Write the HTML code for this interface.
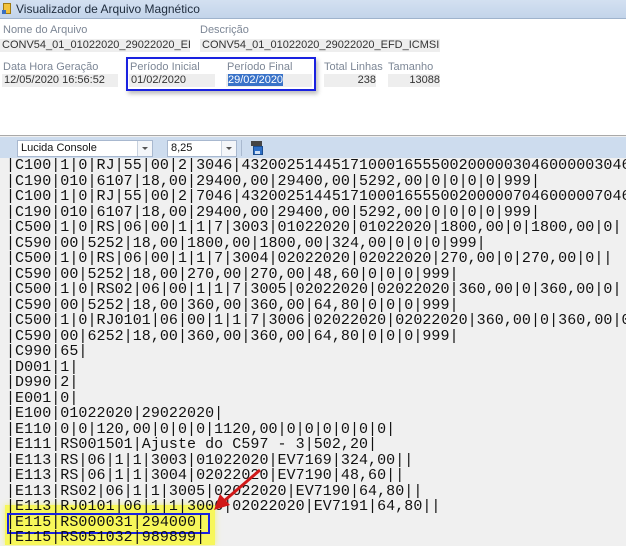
<!DOCTYPE html>
<html><head><meta charset="utf-8"><style>
*{margin:0;padding:0;box-sizing:border-box}
body{width:626px;height:543px;overflow:hidden;background:#f0f0f0;font-family:"Liberation Sans",Tahoma,sans-serif;position:relative}
.abs{position:absolute}
.title{left:0;top:0;width:626px;height:19px;background:linear-gradient(#d3e0f1,#c3d4ea);border-bottom:1px solid #9fb3cc;font-size:12px;color:#1e2b3c;line-height:18px;padding-left:16px}
.panel{left:0;top:19px;width:626px;height:117px;background:#fff;border-bottom:1px solid #a9a9a9}
.lbl{font-size:11px;color:#7d8796}
.fld{font-size:11px;color:#333;background:#eeeeee;height:13px;line-height:13px;padding-left:2px;white-space:nowrap;overflow:hidden}
.tb{left:0;top:137px;width:626px;height:21px;background:#cddcee}
.combo{background:#fff;border:1px solid #a8b8cf;height:17px;font-size:11px;line-height:15px;padding-left:3px;color:#111}
.dd{position:absolute;right:0;top:0;width:15px;height:15px;border-left:1px solid #c8d2df;background:#f4f6f9}
.dd:after{content:"";position:absolute;left:4px;top:6px;border-left:3px solid transparent;border-right:3px solid transparent;border-top:3px solid #555}
.txt{left:6px;top:158px;font-family:"Liberation Mono","Lucida Console",monospace;font-size:15px;line-height:15.5px;color:#111;white-space:pre;letter-spacing:0.05px}
</style></head><body>
<div class="abs title">Visualizador de Arquivo Magnético</div>
<div class="abs" style="left:3px;top:3px;width:8px;height:11px;background:#f2c23a;border:1px solid #a07a10"></div>
<div class="abs" style="left:2px;top:10px;width:4px;height:4px;background:#3a6fc0"></div>
<div class="abs panel"></div>
<div class="abs lbl" style="left:3px;top:24px">Nome do Arquivo</div>
<div class="abs fld" style="left:0;top:39px;width:190px">CONV54_01_01022020_29022020_EFD_IC</div>
<div class="abs lbl" style="left:200px;top:24px">Descrição</div>
<div class="abs fld" style="left:200px;top:39px;width:240px">CONV54_01_01022020_29022020_EFD_ICMSIPI.txt</div>
<div class="abs lbl" style="left:3px;top:61px">Data Hora Geração</div>
<div class="abs fld" style="left:2px;top:74px;width:116px">12/05/2020 16:56:52</div>
<div class="abs lbl" style="left:130px;top:61px">Período Inicial</div>
<div class="abs fld" style="left:129px;top:74px;width:86px">01/02/2020</div>
<div class="abs lbl" style="left:227px;top:61px">Período Final</div>
<div class="abs fld" style="left:226px;top:74px;width:86px"><span style="background:#3a73c8;color:#fff">29/02/2020</span></div>
<div class="abs" style="left:126px;top:57px;width:190px;height:34px;border:2px solid #1a22e0;box-shadow:2px 3px 4px rgba(0,0,0,.25)"></div>
<div class="abs lbl" style="left:324px;top:61px">Total Linhas</div>
<div class="abs fld" style="left:324px;top:74px;width:52px;text-align:right;padding-right:0">238</div>
<div class="abs lbl" style="left:388px;top:61px">Tamanho</div>
<div class="abs fld" style="left:388px;top:74px;width:52px;text-align:right">13088</div>
<div class="abs tb"></div>
<div class="abs combo" style="left:17px;top:140px;width:136px">Lucida Console<div class="dd"></div></div>
<div class="abs combo" style="left:167px;top:140px;width:70px">8,25<div class="dd"></div></div>
<div class="abs" style="left:241px;top:140px;width:1px;height:16px;background:#a9b9cf"></div>
<div class="abs" style="left:251px;top:141px;width:11px;height:5px;background:#444"></div>
<div class="abs" style="left:253px;top:146px;width:10px;height:9px;background:#2d6fc6;border:1px solid #1a4d90"></div>
<div class="abs" style="left:255px;top:151px;width:5px;height:3px;background:#cfe0f5"></div>
<div class="abs" style="left:5px;top:505px;width:210px;height:40px;background:#f7f75a;box-shadow:0 0 6px #eef07a"></div>
<div class="abs" style="left:7px;top:513px;width:203px;height:21px;border:2px solid #1a22e0"></div>
<div class="abs txt">|C100|1|0|RJ|55|00|2|3046|43200251445171000165550020000030460000030460|
|C190|010|6107|18,00|29400,00|29400,00|5292,00|0|0|0|0|999|
|C100|1|0|RJ|55|00|2|7046|43200251445171000165550020000070460000070460|
|C190|010|6107|18,00|29400,00|29400,00|5292,00|0|0|0|0|999|
|C500|1|0|RS|06|00|1|1|7|3003|01022020|01022020|1800,00|0|1800,00|0|
|C590|00|5252|18,00|1800,00|1800,00|324,00|0|0|0|999|
|C500|1|0|RS|06|00|1|1|7|3004|02022020|02022020|270,00|0|270,00|0||
|C590|00|5252|18,00|270,00|270,00|48,60|0|0|0|999|
|C500|1|0|RS02|06|00|1|1|7|3005|02022020|02022020|360,00|0|360,00|0|
|C590|00|5252|18,00|360,00|360,00|64,80|0|0|0|999|
|C500|1|0|RJ0101|06|00|1|1|7|3006|02022020|02022020|360,00|0|360,00|0|
|C590|00|6252|18,00|360,00|360,00|64,80|0|0|0|999|
|C990|65|
|D001|1|
|D990|2|
|E001|0|
|E100|01022020|29022020|
|E110|0|0|120,00|0|0|0|1120,00|0|0|0|0|0|0|
|E111|RS001501|Ajuste do C597 - 3|502,20|
|E113|RS|06|1|1|3003|01022020|EV7169|324,00||
|E113|RS|06|1|1|3004|02022020|EV7190|48,60||
|E113|RS02|06|1|1|3005|02022020|EV7190|64,80||
|E113|RJ0101|06|1|1|3006|02022020|EV7191|64,80||
|E115|RS000031|294000|
|E115|RS051032|989899|</div>
<svg class="abs" style="left:0;top:0" width="626" height="543"><line x1="260" y1="470" x2="224" y2="501" stroke="#d01818" stroke-width="3"/><polygon points="214,510 220,494 230,505" fill="#d01818"/></svg>
</body></html>
